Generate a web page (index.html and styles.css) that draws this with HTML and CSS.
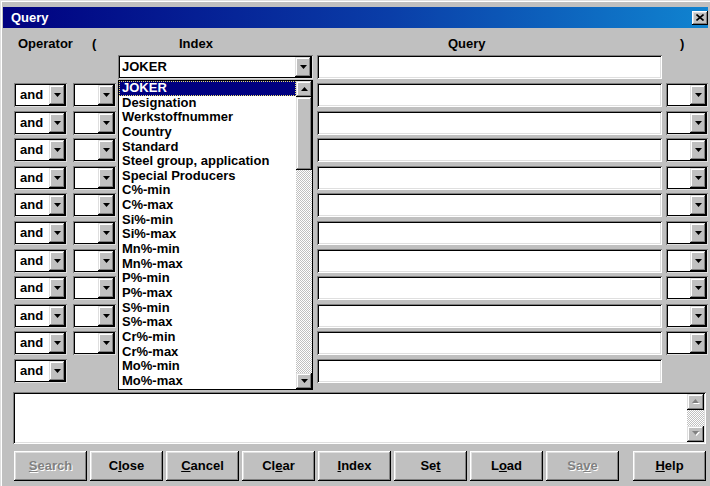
FILE: index.html
```html
<!DOCTYPE html>
<html lang="en">
<head>
<meta charset="utf-8">
<title>Query</title>
<link rel="stylesheet" href="styles.css">
</head>
<body>
<div class="window">
  <div class="titlebar">
    <span class="title">Query</span>
    <button class="tb-close" aria-label="Close">
      <svg width="8" height="7" viewBox="0 0 8 7"><path d="M0.5 0.5 L7.5 6.5 M7.5 0.5 L0.5 6.5" stroke="#000" stroke-width="1.6" fill="none"/></svg>
    </button>
  </div>

  <div class="grid">
    <div class="lbl lbl-op">Operator</div>
    <div class="lbl lbl-par">(</div>
    <div class="lbl lbl-idx">Index</div>
    <div class="lbl lbl-qry">Query</div>
    <div class="lbl lbl-rpar">)</div>

    <!-- first criterion: only index and value -->
    <div></div><div></div>
    <div class="combo c-idx"><span class="val">JOKER</span><span class="drop"><svg width="7" height="4"><polygon points="0,0 7,0 3.5,4"/></svg></span></div>
    <div class="field"></div>
    <div></div>

    <!-- criteria 2..11 -->
    <div class="combo c-op"><span class="val">and</span><span class="drop"><svg width="7" height="4"><polygon points="0,0 7,0 3.5,4"/></svg></span></div>
    <div class="combo c-par"><span class="val"></span><span class="drop"><svg width="7" height="4"><polygon points="0,0 7,0 3.5,4"/></svg></span></div>
    <div></div><div class="field"></div>
    <div class="combo c-rpar"><span class="val"></span><span class="drop"><svg width="7" height="4"><polygon points="0,0 7,0 3.5,4"/></svg></span></div>

    <div class="combo c-op"><span class="val">and</span><span class="drop"><svg width="7" height="4"><polygon points="0,0 7,0 3.5,4"/></svg></span></div>
    <div class="combo c-par"><span class="val"></span><span class="drop"><svg width="7" height="4"><polygon points="0,0 7,0 3.5,4"/></svg></span></div>
    <div></div><div class="field"></div>
    <div class="combo c-rpar"><span class="val"></span><span class="drop"><svg width="7" height="4"><polygon points="0,0 7,0 3.5,4"/></svg></span></div>

    <div class="combo c-op"><span class="val">and</span><span class="drop"><svg width="7" height="4"><polygon points="0,0 7,0 3.5,4"/></svg></span></div>
    <div class="combo c-par"><span class="val"></span><span class="drop"><svg width="7" height="4"><polygon points="0,0 7,0 3.5,4"/></svg></span></div>
    <div></div><div class="field"></div>
    <div class="combo c-rpar"><span class="val"></span><span class="drop"><svg width="7" height="4"><polygon points="0,0 7,0 3.5,4"/></svg></span></div>

    <div class="combo c-op"><span class="val">and</span><span class="drop"><svg width="7" height="4"><polygon points="0,0 7,0 3.5,4"/></svg></span></div>
    <div class="combo c-par"><span class="val"></span><span class="drop"><svg width="7" height="4"><polygon points="0,0 7,0 3.5,4"/></svg></span></div>
    <div></div><div class="field"></div>
    <div class="combo c-rpar"><span class="val"></span><span class="drop"><svg width="7" height="4"><polygon points="0,0 7,0 3.5,4"/></svg></span></div>

    <div class="combo c-op"><span class="val">and</span><span class="drop"><svg width="7" height="4"><polygon points="0,0 7,0 3.5,4"/></svg></span></div>
    <div class="combo c-par"><span class="val"></span><span class="drop"><svg width="7" height="4"><polygon points="0,0 7,0 3.5,4"/></svg></span></div>
    <div></div><div class="field"></div>
    <div class="combo c-rpar"><span class="val"></span><span class="drop"><svg width="7" height="4"><polygon points="0,0 7,0 3.5,4"/></svg></span></div>

    <div class="combo c-op"><span class="val">and</span><span class="drop"><svg width="7" height="4"><polygon points="0,0 7,0 3.5,4"/></svg></span></div>
    <div class="combo c-par"><span class="val"></span><span class="drop"><svg width="7" height="4"><polygon points="0,0 7,0 3.5,4"/></svg></span></div>
    <div></div><div class="field"></div>
    <div class="combo c-rpar"><span class="val"></span><span class="drop"><svg width="7" height="4"><polygon points="0,0 7,0 3.5,4"/></svg></span></div>

    <div class="combo c-op"><span class="val">and</span><span class="drop"><svg width="7" height="4"><polygon points="0,0 7,0 3.5,4"/></svg></span></div>
    <div class="combo c-par"><span class="val"></span><span class="drop"><svg width="7" height="4"><polygon points="0,0 7,0 3.5,4"/></svg></span></div>
    <div></div><div class="field"></div>
    <div class="combo c-rpar"><span class="val"></span><span class="drop"><svg width="7" height="4"><polygon points="0,0 7,0 3.5,4"/></svg></span></div>

    <div class="combo c-op"><span class="val">and</span><span class="drop"><svg width="7" height="4"><polygon points="0,0 7,0 3.5,4"/></svg></span></div>
    <div class="combo c-par"><span class="val"></span><span class="drop"><svg width="7" height="4"><polygon points="0,0 7,0 3.5,4"/></svg></span></div>
    <div></div><div class="field"></div>
    <div class="combo c-rpar"><span class="val"></span><span class="drop"><svg width="7" height="4"><polygon points="0,0 7,0 3.5,4"/></svg></span></div>

    <div class="combo c-op"><span class="val">and</span><span class="drop"><svg width="7" height="4"><polygon points="0,0 7,0 3.5,4"/></svg></span></div>
    <div class="combo c-par"><span class="val"></span><span class="drop"><svg width="7" height="4"><polygon points="0,0 7,0 3.5,4"/></svg></span></div>
    <div></div><div class="field"></div>
    <div class="combo c-rpar"><span class="val"></span><span class="drop"><svg width="7" height="4"><polygon points="0,0 7,0 3.5,4"/></svg></span></div>

    <div class="combo c-op"><span class="val">and</span><span class="drop"><svg width="7" height="4"><polygon points="0,0 7,0 3.5,4"/></svg></span></div>
    <div class="combo c-par"><span class="val"></span><span class="drop"><svg width="7" height="4"><polygon points="0,0 7,0 3.5,4"/></svg></span></div>
    <div></div><div class="field"></div>
    <div class="combo c-rpar"><span class="val"></span><span class="drop"><svg width="7" height="4"><polygon points="0,0 7,0 3.5,4"/></svg></span></div>

    <!-- last criterion: operator and value only -->
    <div class="combo c-op"><span class="val">and</span><span class="drop"><svg width="7" height="4"><polygon points="0,0 7,0 3.5,4"/></svg></span></div>
    <div></div><div></div><div class="field"></div><div></div>

    <!-- open index list of the first criterion -->
    <div class="dropdown">
      <ul class="items">
        <li class="sel">JOKER</li>
        <li>Designation</li>
        <li>Werkstoffnummer</li>
        <li>Country</li>
        <li>Standard</li>
        <li>Steel group, application</li>
        <li>Special Producers</li>
        <li>C%-min</li>
        <li>C%-max</li>
        <li>Si%-min</li>
        <li>Si%-max</li>
        <li>Mn%-min</li>
        <li>Mn%-max</li>
        <li>P%-min</li>
        <li>P%-max</li>
        <li>S%-min</li>
        <li>S%-max</li>
        <li>Cr%-min</li>
        <li>Cr%-max</li>
        <li>Mo%-min</li>
        <li>Mo%-max</li>
      </ul>
      <div class="vscroll">
        <span class="sbtn"><svg width="7" height="4"><polygon points="0,4 7,4 3.5,0"/></svg></span>
        <span class="thumb"></span>
        <span class="track"></span>
        <span class="sbtn"><svg width="7" height="4"><polygon points="0,0 7,0 3.5,4"/></svg></span>
      </div>
    </div>
  </div>

  <div class="memo">
    <div class="vscroll">
      <span class="sbtn"><svg width="8" height="5"><polygon points="1,5 8,5 4.5,1" fill="#fff"/><polygon points="0,4 7,4 3.5,0" fill="#808080"/></svg></span>
      <span class="track"></span>
      <span class="sbtn"><svg width="8" height="5"><polygon points="1,1 8,1 4.5,5" fill="#fff"/><polygon points="0,0 7,0 3.5,4" fill="#808080"/></svg></span>
    </div>
  </div>

  <div class="buttons">
    <button class="btn" disabled><u>S</u>earch</button>
    <button class="btn">C<u>l</u>ose</button>
    <button class="btn"><u>C</u>ancel</button>
    <button class="btn">Cl<u>e</u>ar</button>
    <button class="btn"><u>I</u>ndex</button>
    <button class="btn">Se<u>t</u></button>
    <button class="btn">L<u>o</u>ad</button>
    <button class="btn" disabled>Sa<u>v</u>e</button>
    <button class="btn btn-help"><u>H</u>elp</button>
  </div>
</div>
</body>
</html>
```
FILE: styles.css
```css
* { box-sizing: border-box; }

html, body {
  margin: 0;
  padding: 0;
}

body {
  width: 710px;
  height: 486px;
  overflow: hidden;
  background: #c0c0c0;
  font: bold 13px "Liberation Sans", Arial, sans-serif;
  color: #000;
}

/* dialog frame */
.window {
  height: 486px;
  padding: 7px 2px 0 3px;
  background: #c0c0c0;
  box-shadow: inset 1px 1px #dfdfdf, inset 2px 2px #fff;
}

.titlebar {
  height: 21px;
  display: flex;
  align-items: center;
  justify-content: space-between;
  padding: 0 0 0 8px;
  background: linear-gradient(90deg, #000080 0%, #0a3ea8 55%, #1084d0 100%);
  color: #fff;
}

.title { font-size: 13px; }

.tb-close {
  width: 16px;
  height: 14px;
  padding: 0;
  border: 0;
  display: flex;
  align-items: center;
  justify-content: center;
  background: #c0c0c0;
  box-shadow: inset -1px -1px #000, inset 1px 1px #fff, inset -2px -2px #808080, inset 2px 2px #dfdfdf;
}

/* criteria table */
.grid {
  position: relative;
  display: grid;
  grid-template-columns: 59px 45px 199px 349px 42px;
  grid-template-rows: 23.8px repeat(12, 24px);
  row-gap: 3.6px;
  margin-left: 11px;
}

.lbl {
  line-height: 16px;
  padding-top: 8px;
  white-space: nowrap;
}
.lbl-op { padding-left: 4px; }
.lbl-par { padding-left: 19px; }
.lbl-idx { padding-left: 61px; }
.lbl-qry { padding-left: 131px; }
.lbl-rpar { padding-left: 14px; }

.combo {
  display: flex;
  height: 24px;
  padding: 2px;
  background: #fff;
  box-shadow: inset 1px 1px #808080, inset -1px -1px #dfdfdf, inset 2px 2px #000, inset -2px -2px #000;
}
.combo .val {
  flex: 1;
  padding-left: 4px;
  line-height: 20px;
  white-space: nowrap;
}
.c-op { width: 53px; }
.c-par { width: 43px; }
.c-idx { width: 195px; }
.c-idx .val { padding-left: 2px; }
.c-rpar { width: 42px; }

.drop, .sbtn {
  width: 16px;
  display: flex;
  align-items: center;
  justify-content: center;
  background: #c0c0c0;
  box-shadow: inset -1px -1px #000, inset 1px 1px #dfdfdf, inset -2px -2px #808080, inset 2px 2px #fff;
}
.drop svg, .sbtn svg { fill: #000; }

.field {
  width: 345px;
  height: 24px;
  background: #fff;
  box-shadow: inset 1px 1px #808080, inset -1px -1px #fff, inset 2px 2px #000, inset -2px -2px #dfdfdf;
}

/* dropped-down index list */
.dropdown {
  position: absolute;
  left: 104px;
  top: 52px;
  width: 195px;
  height: 310px;
  display: flex;
  background: #fff;
  border: 1px solid #000;
  overflow: hidden;
}

.items {
  flex: 1;
  margin: 0;
  padding: 0;
  list-style: none;
  overflow: hidden;
}
.items li {
  height: 14.65px;
  line-height: 14.65px;
  padding-left: 3px;
  white-space: nowrap;
}
.items li.sel {
  background: #000080;
  color: #fff;
  outline: 1px dotted #e8e070;
  outline-offset: -1px;
}

.vscroll {
  width: 16px;
  display: flex;
  flex-direction: column;
}
.vscroll .sbtn { height: 16px; flex: none; }
.vscroll .thumb {
  height: 73px;
  flex: none;
  background: #c0c0c0;
  box-shadow: inset -1px -1px #000, inset 1px 1px #dfdfdf, inset -2px -2px #808080, inset 2px 2px #fff;
}
.vscroll .track {
  flex: 1;
  background: repeating-conic-gradient(#fff 0 25%, #c0c0c0 0 50%) 0 0 / 2px 2px;
}

/* notes box */
.memo {
  width: 693px;
  height: 52px;
  margin: 9px 0 0 10px;
  padding: 2px;
  display: flex;
  justify-content: flex-end;
  background: #fff;
  box-shadow: inset 1px 1px #808080, inset -1px -1px #fff, inset 2px 2px #000, inset -2px -2px #dfdfdf;
}
.memo .vscroll { width: 17px; }
.memo .sbtn { width: 17px; }

/* command buttons */
.buttons {
  display: flex;
  gap: 3px;
  margin-top: 7px;
  padding: 0 2px 0 11px;
}

.btn {
  width: 73px;
  height: 30px;
  padding: 0;
  border: 0;
  background: #c0c0c0;
  font: bold 13px "Liberation Sans", Arial, sans-serif;
  color: #000;
  box-shadow: inset -1px -1px #000, inset 1px 1px #fff, inset -2px -2px #808080, inset 2px 2px #dfdfdf;
}
.btn:disabled {
  color: #808080;
  text-shadow: 1px 1px #fff;
}
.btn-help { margin-left: auto; }
```
